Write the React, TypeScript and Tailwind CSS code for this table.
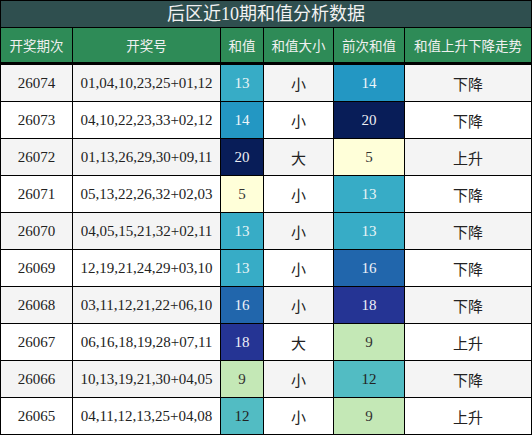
import React from 'react';

type Row = { issue: string; nums: string; sum: number; size: string; prev: number; trend: string };

const ROWS: Row[] = [
  { issue: '26074', nums: '01,04,10,23,25+01,12', sum: 13, size: '小', prev: 14, trend: '下降' },
  { issue: '26073', nums: '04,10,22,23,33+02,12', sum: 14, size: '小', prev: 20, trend: '下降' },
  { issue: '26072', nums: '01,13,26,29,30+09,11', sum: 20, size: '大', prev: 5, trend: '上升' },
  { issue: '26071', nums: '05,13,22,26,32+02,03', sum: 5, size: '小', prev: 13, trend: '下降' },
  { issue: '26070', nums: '04,05,15,21,32+02,11', sum: 13, size: '小', prev: 13, trend: '下降' },
  { issue: '26069', nums: '12,19,21,24,29+03,10', sum: 13, size: '小', prev: 16, trend: '下降' },
  { issue: '26068', nums: '03,11,12,21,22+06,10', sum: 16, size: '小', prev: 18, trend: '下降' },
  { issue: '26067', nums: '06,16,18,19,28+07,11', sum: 18, size: '大', prev: 9, trend: '上升' },
  { issue: '26066', nums: '10,13,19,21,30+04,05', sum: 9, size: '小', prev: 12, trend: '下降' },
  { issue: '26065', nums: '04,11,12,13,25+04,08', sum: 12, size: '小', prev: 9, trend: '上升' },
];

// heat colours for the sum cells
const heat = (v: number) => {
  if (v <= 5) return 'bg-[#ffffd9] text-[#333]';
  if (v <= 9) return 'bg-[#c4e8b6] text-[#333]';
  if (v <= 12) return 'bg-[#52bcc3] text-[#222]';
  if (v <= 13) return 'bg-[#37acc6] text-[#e8f4f6]';
  if (v <= 14) return 'bg-[#2397c3] text-[#eef6fa]';
  if (v <= 16) return 'bg-[#2166ac] text-[#eef2f8]';
  if (v <= 18) return 'bg-[#253494] text-[#eef0f8]';
  return 'bg-[#081d58] text-[#eef0f4]';
};

const HEADERS = ['开奖期次', '开奖号', '和值', '和值大小', '前次和值', '和值上升下降走势'];

export default function App() {
  return (
    <div className="w-[532px] h-[435px] bg-black p-px flex flex-col gap-px font-['Liberation_Serif','Noto_Sans_CJK_SC',serif]">
      <div className="h-[28px] bg-[#2f4f4f] text-[#f2f2f2] text-[18px] flex items-center justify-center leading-none">
        后区近10期和值分析数据
      </div>
      <div className="grid grid-cols-[71px_147px_42px_69px_70px_126px] auto-rows-[36px] gap-px">
        {HEADERS.map((h) => (
          <div
            key={h}
            className="h-[34px] bg-[#2e8b57] text-[#f0f0f0] text-[13.5px] flex items-center justify-center font-['Noto_Sans_CJK_SC',sans-serif]"
          >
            {h}
          </div>
        ))}
        {ROWS.map((r, i) => {
          const bg = i % 2 === 0 ? 'bg-[#f4f4f4]' : 'bg-white';
          const cell = 'flex items-center justify-center text-[15px] leading-none';
          return (
            <React.Fragment key={r.issue}>
              <div className={`${cell} ${bg} text-[#222]`}>{r.issue}</div>
              <div className={`${cell} ${bg} text-[#222]`}>{r.nums}</div>
              <div className={`${cell} ${heat(r.sum)}`}>{r.sum}</div>
              <div className={`${cell} ${bg} text-[#222] font-['Noto_Sans_CJK_SC',sans-serif] text-[14px]`}>{r.size}</div>
              <div className={`${cell} ${heat(r.prev)}`}>{r.prev}</div>
              <div className={`${cell} ${bg} text-[#222] font-['Noto_Sans_CJK_SC',sans-serif] text-[14px]`}>{r.trend}</div>
            </React.Fragment>
          );
        })}
      </div>
    </div>
  );
}
